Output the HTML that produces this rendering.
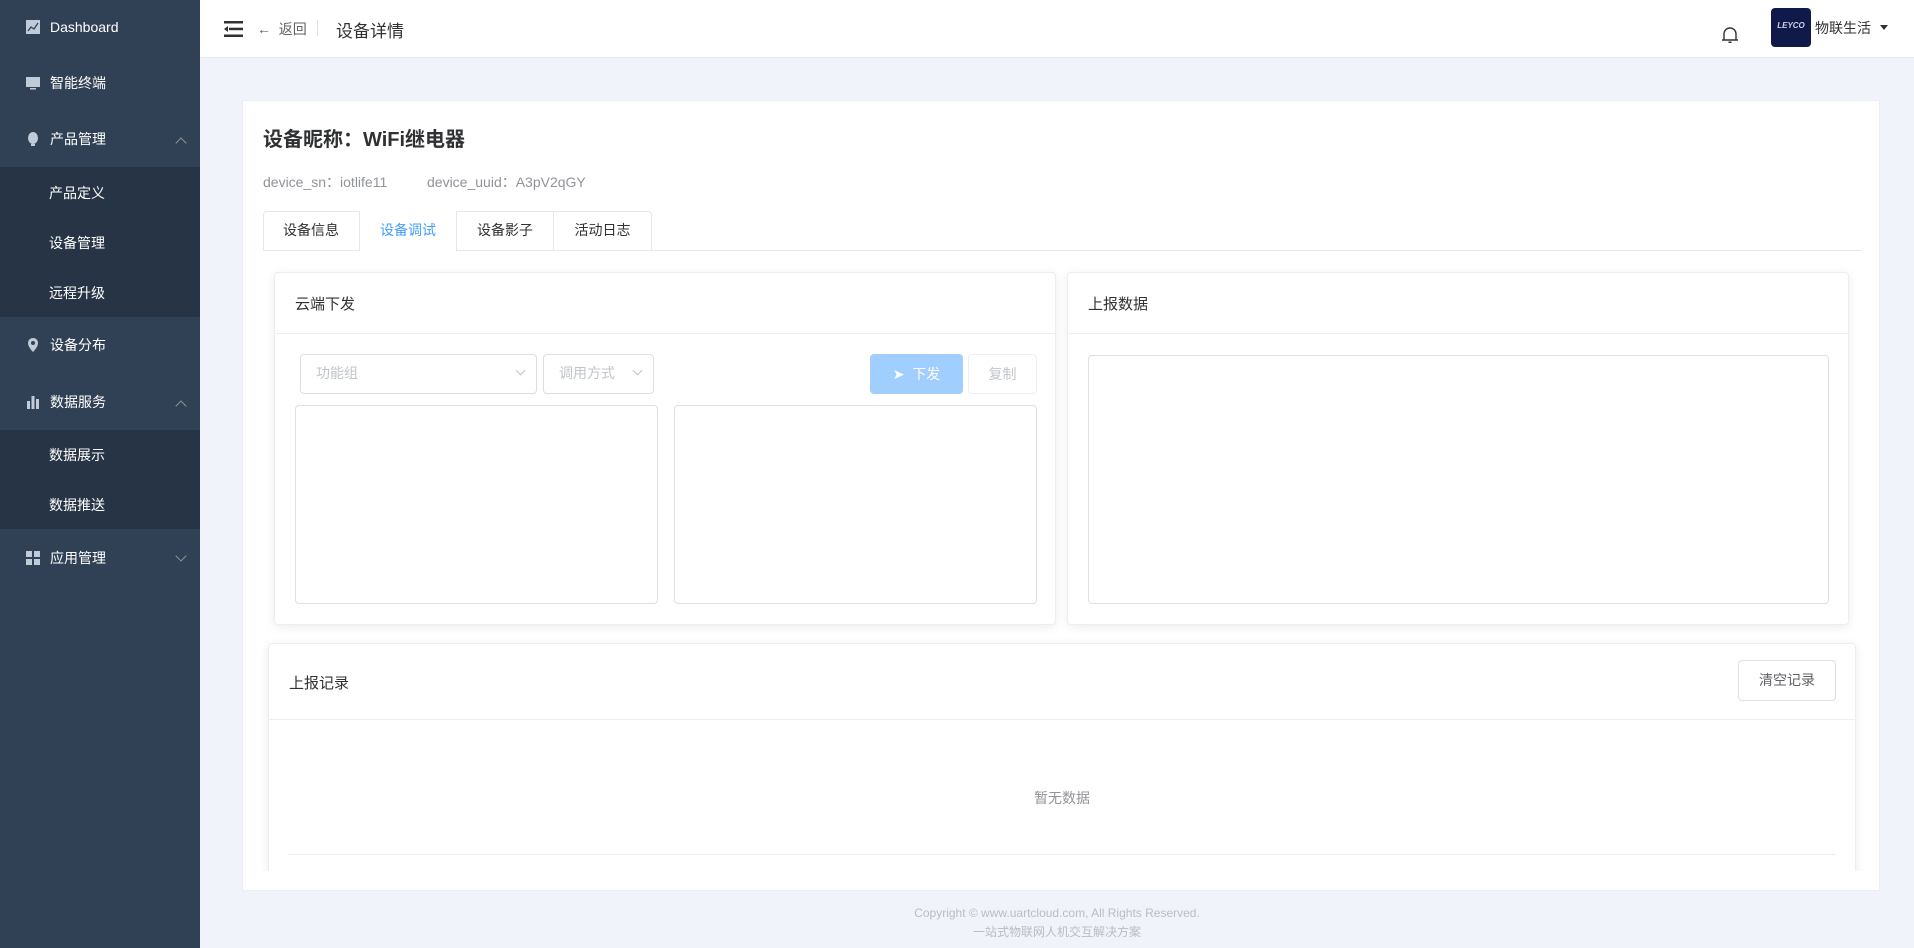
<!DOCTYPE html>
<html><head><meta charset="utf-8"><style>
*{box-sizing:border-box;margin:0;padding:0}
body{width:1914px;height:948px;overflow:hidden;background:#f0f4fa;font-family:"Liberation Sans","Noto Sans CJK SC",sans-serif;position:relative;color:#303133}
.abs{position:absolute}
#side{left:0;top:0;width:200px;height:948px;background:#304156}
.mi{position:absolute;left:0;width:200px;color:#fff;font-size:14px;line-height:20px}
.mi .ic{position:absolute;left:26px;top:3px;width:14px;height:14px}
.mi span{position:absolute;left:50px}
.sub{position:absolute;left:0;width:200px;background:#263445}
.si{position:absolute;left:49px;color:#fff;font-size:14px}
.arr{position:absolute;left:177px;top:6px;width:8px;height:8px;border-left:1px solid #909399;border-top:1px solid #909399}
#hdr{left:200px;top:0;width:1714px;height:58px;background:#fff;border-bottom:1px solid #e8ecf0}
.card{background:#fff}
.pan{position:absolute;background:#fff;border:1px solid #ebeef5;border-radius:4px;box-shadow:0 2px 10px rgba(0,0,0,.08)}
.ph{position:absolute;left:0;right:0;top:0;border-bottom:1px solid #ebeef5}
.ta{position:absolute;border:1px solid #dcdfe6;border-radius:4px;background:#fff}
.sel{position:absolute;border:1px solid #dcdfe6;border-radius:4px;color:#c0c4cc;font-size:14px;line-height:37px;padding-left:15px}
.sel i{position:absolute;right:12px;top:12px;width:7px;height:7px;border-right:1px solid #c0c4cc;border-bottom:1px solid #c0c4cc;transform:rotate(45deg)}
.tab{position:absolute;top:0;height:40px;width:97px;border-right:1px solid #e4e7ed;text-align:center;line-height:39px;font-size:14px;color:#303133}
</style></head><body>
<div id="side" class="abs">
 <div class="mi" style="top:17px"><svg class="ic" viewBox="0 0 14 14"><rect width="14" height="14" fill="#bfcbd9"/><path d="M2 11 L5 7 L8 9 L12 3" stroke="#304156" fill="none" stroke-width="1.3"/></svg><span>Dashboard</span></div>
 <div class="mi" style="top:73px"><svg class="ic" viewBox="0 0 14 14"><rect y="1" width="14" height="10" fill="#bfcbd9"/><rect x="4" y="12" width="6" height="1.5" fill="#bfcbd9"/></svg><span>智能终端</span></div>
 <div class="mi" style="top:129px"><svg class="ic" viewBox="0 0 14 14"><ellipse cx="7" cy="6" rx="5" ry="6" fill="#bfcbd9"/><rect x="5" y="12" width="4" height="2" fill="#bfcbd9"/></svg><span>产品管理</span><div class="arr" style="transform:rotate(45deg);top:10px"></div></div>
 <div class="sub" style="top:167px;height:150px">
  <div class="si" style="top:16px">产品定义</div>
  <div class="si" style="top:66px">设备管理</div>
  <div class="si" style="top:116px">远程升级</div>
 </div>
 <div class="mi" style="top:335px"><svg class="ic" viewBox="0 0 14 14"><path d="M7 0C4 0 2 2.3 2 5c0 4 5 9 5 9s5-5 5-9c0-2.7-2-5-5-5z" fill="#bfcbd9"/><circle cx="7" cy="5" r="2" fill="#304156"/></svg><span>设备分布</span></div>
 <div class="mi" style="top:392px"><svg class="ic" viewBox="0 0 14 14"><rect x="1" y="6" width="3" height="8" fill="#bfcbd9"/><rect x="5.5" y="1" width="3" height="13" fill="#bfcbd9"/><rect x="10" y="4" width="3" height="10" fill="#bfcbd9"/></svg><span>数据服务</span><div class="arr" style="transform:rotate(45deg);top:10px"></div></div>
 <div class="sub" style="top:430px;height:99px">
  <div class="si" style="top:15px">数据展示</div>
  <div class="si" style="top:65px">数据推送</div>
 </div>
 <div class="mi" style="top:548px"><svg class="ic" viewBox="0 0 14 14"><rect width="6" height="6" fill="#bfcbd9"/><rect x="8" width="6" height="6" fill="#bfcbd9"/><rect y="8" width="6" height="6" fill="#bfcbd9"/><rect x="8" y="8" width="6" height="6" fill="#bfcbd9"/></svg><span>应用管理</span><div class="arr" style="transform:rotate(225deg);top:4px"></div></div>
</div>
<div id="hdr" class="abs">
 <svg class="abs" style="left:24px;top:21px" width="19" height="16" viewBox="0 0 19 16"><rect width="19" height="2.5" fill="#303133"/><rect x="5" y="6.7" width="14" height="2.5" fill="#303133"/><rect y="13.5" width="19" height="2.5" fill="#303133"/><path d="M0 8 L4 5 L4 11Z" fill="#303133"/></svg>
 <div class="abs" style="left:57px;top:19px;font-size:14px;color:#606266">←&nbsp; 返回</div>
 <div class="abs" style="left:117px;top:20px;width:1px;height:16px;background:#dcdfe6"></div>
 <div class="abs" style="left:136px;top:17px;font-size:17px;color:#303133">设备详情</div>
 <svg class="abs" style="left:1521px;top:25px" width="18" height="20" viewBox="0 0 18 20"><path d="M3 15 V9 a6 6 0 0 1 12 0 V15 H17 H1 Z" fill="none" stroke="#303133" stroke-width="1.4"/><rect x="7.5" y="16.5" width="3" height="1.5" fill="#303133"/></svg>
 <div class="abs" style="left:1571px;top:8px;width:40px;height:39px;background:#0f1a4a;border-radius:4px;color:#cfd3e6;font-size:8px;font-style:italic;font-weight:bold;text-align:center;padding-top:13px">LEYCO</div>
 <div class="abs" style="left:1615px;top:18px;font-size:14px;color:#303133">物联生活</div>
 <div class="abs" style="left:1680px;top:25px;border-left:4px solid transparent;border-right:4px solid transparent;border-top:5px solid #303133"></div>
</div>
<div class="abs card" style="left:242px;top:100px;width:1638px;height:791px;border:1px solid #ebeef5;overflow:hidden">
 <div class="abs" style="left:0;top:0;width:1636px;height:770px;overflow:hidden">
 <div class="abs" style="left:20px;top:22px;font-size:20px;font-weight:bold;color:#303133">设备昵称：WiFi继电器</div>
 <div class="abs" style="left:20px;top:71px;font-size:14px;color:#909399">device_sn：iotlife11</div>
 <div class="abs" style="left:184px;top:71px;font-size:14px;color:#909399">device_uuid：A3pV2qGY</div>
 <div class="abs" style="left:20px;top:110px;width:1598px;height:40px;border-bottom:1px solid #e4e7ed">
  <div class="abs" style="left:0;top:0;width:389px;height:40px;border:1px solid #e4e7ed;border-bottom:none;border-radius:4px 4px 0 0"></div>
  <div class="tab" style="left:0">设备信息</div>
  <div class="tab" style="left:97px;color:#409eff;background:#fff;height:41px;border-bottom:1px solid #fff">设备调试</div>
  <div class="tab" style="left:194px">设备影子</div>
  <div class="tab" style="left:291px;border-right:none">活动日志</div>
 </div>
 <div class="pan" style="left:31px;top:171px;width:782px;height:353px">
  <div class="ph" style="height:61px"></div>
  <div class="abs" style="left:20px;top:20px;font-size:15px">云端下发</div>
  <div class="sel" style="left:25px;top:81px;width:237px;height:40px">功能组<i></i></div>
  <div class="sel" style="left:268px;top:81px;width:111px;height:40px">调用方式<i></i></div>
  <div class="abs" style="left:595px;top:81px;width:93px;height:40px;background:#a0cfff;border-radius:4px;color:#fff;font-size:14px;line-height:40px;text-align:center">➤&nbsp; 下发</div>
  <div class="abs" style="left:693px;top:81px;width:69px;height:40px;border:1px solid #ebeef5;border-radius:4px;color:#c0c4cc;font-size:14px;line-height:38px;text-align:center">复制</div>
  <div class="ta" style="left:20px;top:132px;width:363px;height:199px"></div>
  <div class="ta" style="left:399px;top:132px;width:363px;height:199px"></div>
 </div>
 <div class="pan" style="left:824px;top:171px;width:782px;height:353px">
  <div class="ph" style="height:61px"></div>
  <div class="abs" style="left:20px;top:20px;font-size:15px">上报数据</div>
  <div class="ta" style="left:20px;top:82px;width:741px;height:249px"></div>
 </div>
 <div class="pan" style="left:25px;top:542px;width:1588px;height:300px">
  <div class="ph" style="height:76px"></div>
  <div class="abs" style="left:20px;top:28px;font-size:15px">上报记录</div>
  <div class="abs" style="left:1469px;top:16px;width:98px;height:41px;border:1px solid #dcdfe6;border-radius:4px;font-size:14px;line-height:39px;text-align:center;color:#606266">清空记录</div>
  <div class="abs" style="left:0;right:0;top:144px;text-align:center;font-size:14px;color:#909399">暂无数据</div>
  <div class="abs" style="left:19px;right:19px;top:210px;height:1px;background:#ebeef5"></div>
 </div>
 </div>
</div>
<div class="abs" style="left:200px;width:1714px;top:904px;text-align:center;font-size:12px;color:#b8bcc4;line-height:19px">Copyright © www.uartcloud.com, All Rights Reserved.<br>一站式物联网人机交互解决方案</div>
</body></html>
